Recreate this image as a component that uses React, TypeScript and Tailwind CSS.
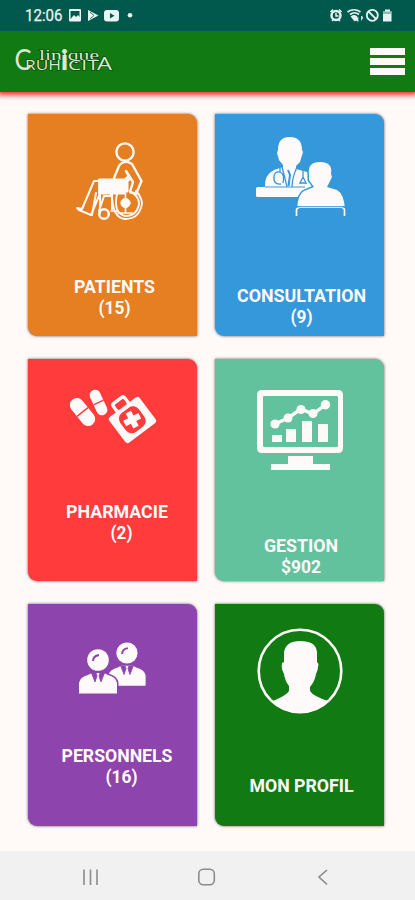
import type { ReactNode } from 'react';

function Line({ width, shift, children }: { width: number; shift?: number; children: string }) {
  return (
    <svg width="169" height="22" className="block overflow-visible" fill="#fffafa">
      <text x={84.5 + (shift ?? 0)} y="16.8" textAnchor="middle" textLength={width} lengthAdjust="spacingAndGlyphs" fontFamily="Roboto, sans-serif" fontWeight="700" fontSize="18">
        {children}
      </text>
    </svg>
  );
}

function Card({ color, box, gap, icon, children }: { color: string; box: string; gap: string; icon: ReactNode; children: ReactNode }) {
  return (
    <section className={`flex h-[222px] flex-col rounded-tr-[9px] rounded-bl-[9px] shadow-[0_0_3px_rgba(40,40,40,0.75)] ${color}`}>
      <svg viewBox={box} width="169" height="120" className="block shrink-0" fill="#fffafa">
        {icon}
      </svg>
      <div className={`flex flex-col -space-y-px ${gap}`}>{children}</div>
    </section>
  );
}

const wheelchair = (
  <g fill="none" stroke="#fffafa" strokeWidth="2.4" strokeLinejoin="round" strokeLinecap="round">
    <circle cx="125" cy="152" r="8.6" />
    <path d="M114 178L119 166Q122 161 128 162L132 164L141.500 181L136 194L130 192L133 182L126 171L130 179L127 181" />
    <path d="M99 181H94L82 209L77 208L79 210L91 215L101 191M96 193L92 215M111 193V196H104L99 211M112 193V209M100 195V213" strokeWidth="2" />
    <path d="M99 179H124L128 176V192H125V194H99Z" fill="#fffafa" strokeWidth="1" />
    <path d="M112 193Q112 218 125 219Q140 219 142 203Q141 196 136 191M117 194Q113 213 125 216Q137 216 139 204Q139 198 134 194" strokeWidth="1.9" />
    <circle cx="104" cy="214" r="4.800" />
    <circle cx="125.5" cy="203" r="4.6" fill="#fffafa" strokeWidth="1" />
    <path d="M125.5 193V212M118 213H132M111 211H117" strokeWidth="1.6" />
  </g>
);

const consultation = (
  <g>
    <path d="M278 150Q278 137 289.500 137Q302 137 302 150L303 152L300 162L296 166V169L307 172Q314 176 313 187H265Q264 175 274 170L283 167V165L279 160L277 153Z" />
    <path d="M257.500 187H313V197H257.500Q256 197 256 195.500V188.500Q256 187 257.500 187Z" />
    <g fill="none" stroke="#3498db" strokeWidth="1.3">
      <path d="M282 167Q285 178 287 187M297 167Q292 178 292 187M280 168V172M281 184Q273 185 274 176Q275 171 280 172Q285 174 283 183M303 169V178M303 177L299.500 184M303 177L306.500 184M300 183H306" />
      <path d="M288 170L290 175L288.500 186" strokeWidth="2" />
      <path d="M265 187H305" strokeWidth="1" />
    </g>
    <path d="M309 175Q307 162 320 162Q333 162 331 174L332 177L327 187L337 190Q344 194 345 209H297Q298 194 304 191L314 187L309 180Z" stroke="#3498db" strokeWidth="3" paintOrder="stroke" />
    <path d="M296.5 217V208H344V217" fill="none" stroke="#3498db" strokeWidth="4" />
    <path d="M296.500 216V210Q296.500 208 299 208M342 208Q344.500 208 344.500 210V216" fill="none" stroke="#fffafa" strokeWidth="1.7" />
    <path d="M299 207.300H342" stroke="#fffafa" strokeWidth="1" />
  </g>
);

function Pill({ place, w, h }: { place: string; w: number; h: number }) {
  return (
    <g transform={place}>
      <rect x={-w / 2} y={-h / 2} width={w} height={h} rx={w / 2} />
      <path d={`M${-w / 2} 0H${w / 2}`} stroke="#ff3b3b" strokeWidth="1.4" />
    </g>
  );
}

const pharmacy = (
  <g>
    <Pill place="translate(82.5 412) rotate(-39)" w={14} h={32} />
    <Pill place="translate(98.500 402.5) rotate(-25)" w={11} h={27} />
    <g transform="translate(131 418) rotate(-37)">
      <rect x="-19" y="-13.500" width="38" height="32" rx="3" />
      <path d="M-7 -13V-20Q-7 -22 -5 -22H5Q7 -22 7 -20V-13" fill="none" stroke="#fffafa" strokeWidth="3.5" />
      <path d="M-5.500 -16.800H5.500" stroke="#ff3b3b" strokeWidth="3" />
      <rect x="-11.500" y="-9.500" width="23" height="23.500" rx="7" fill="#ff3b3b" />
      <path d="M-3 -6.500H3V-1H8.500V5H3V10.500H-3V5H-8.500V-1H-3Z" transform="rotate(10 0 2)" />
    </g>
  </g>
);

const chart = (
  <g>
    <path fillRule="evenodd" d="M262 390H338Q343 390 343 395V448Q343 453 338 453H262Q257 453 257 448V395Q257 390 262 390ZM264 396Q263 396 263 397V446Q263 447 264 447H337Q338 447 338 446V397Q338 396 337 396Z" />
    <path d="M288 456H313V464H330V470H271V464H288ZM272 435H282V442H272ZM286 429H296V442H286ZM302 421H312V442H302ZM318 424H328V442H318Z" />
    <path d="M275 424L288 418L301 409L313 414L325 405" fill="none" stroke="#fffafa" strokeWidth="3.4" />
    <circle cx="275" cy="424" r="4.6" />
    <circle cx="288" cy="418" r="4.5" />
    <circle cx="301" cy="409.5" r="4.5" />
    <circle cx="313" cy="413.500" r="4.5" />
    <circle cx="325.5" cy="404.7" r="4.7" />
  </g>
);

function Person() {
  return (
    <g>
      <path d="M-19 33.500V23Q-18 17 -10 15L-6 13H6L10 15Q18 17 19 23V33.500Z" stroke="#8e44ad" strokeWidth="3" paintOrder="stroke" />
      <circle r="10.8" stroke="#8e44ad" strokeWidth="2.5" paintOrder="stroke" />
      <path d="M-5 1Q-5 -4 1 -5" fill="none" stroke="#8e44ad" strokeWidth="2" />
      <path d="M-6.500 13L-3 22L-1 16L-2 13M6.500 13L3 22L1 16L2 13" fill="#8e44ad" stroke="#8e44ad" strokeWidth=".8" />
    </g>
  );
}

const staff = (
  <g>
    <g transform="translate(127 653) scale(.98)"><Person /></g>
    <g transform="translate(98 660)"><Person /></g>
  </g>
);

const profile = (
  <g>
    <circle cx="300" cy="671" r="41.3" fill="none" stroke="#fffafa" strokeWidth="2.6" />
    <path d="M273 701Q287 695 289 691V686Q285 681 284 674Q281 669 282 663L284 662V652Q286 641 300 641Q316 641 317 652V662L318.500 664Q318 670 316 674Q315 681 310 687V691Q313 696 328 701Q317 713 300 713Q283 713 273 701Z" />
  </g>
);

function StatusBar() {
  return (
    <div className="relative z-20 flex h-[31px] shrink-0 items-center bg-[#00594c]">
      <svg width="415" height="31" viewBox="0 0 415 31" className="block" fill="#e9f5f2">
        <text x="25" y="21" fontFamily="Roboto, sans-serif" fontSize="16" textLength="37.5" lengthAdjust="spacingAndGlyphs" stroke="#e9f5f2" strokeWidth=".25">12:06</text>
        <path fillRule="evenodd" d="M70 9H80Q81 9 81 10V20Q81 21.500 80 21.500H70Q69 21.500 69 20V10Q69 9 70 9ZM70.500 11V19L74 15L76 17L78 15L79.500 17V11Z" />
        <path d="M88 10L98.500 15.500L88 21Z" />
        <path d="M90 12L94 15.500L90 19" fill="none" stroke="#00594c" strokeWidth=".8" />
        <rect x="104" y="10" width="15" height="11.5" rx="3" />
        <path d="M110 13L114.500 15.700L110 18.500Z" fill="#00594c" />
        <circle cx="130" cy="15.300" r="2.300" />
        <circle cx="336" cy="15.500" r="4.500" fill="none" stroke="#e9f5f2" strokeWidth="2.400" />
        <path d="M330.500 12L333 9.500M341.500 12L339 9.500M332 21L334 19M340 21L338 19M336 13V16H338.500" stroke="#e9f5f2" strokeWidth="1.500" fill="none" />
        <path d="M347.500 12Q354 7.500 360.500 12M350 14.500Q354.500 11 359 14.500" stroke="#e9f5f2" strokeWidth="1.700" fill="none" />
        <path d="M354.500 21L351 16.500Q354 14 357 16.500V20ZM358 17V21.500L356.500 20M361.500 20.500V16L363 18" stroke="#e9f5f2" strokeWidth=".7" />
        <circle cx="372.300" cy="15.300" r="5.500" fill="none" stroke="#e9f5f2" strokeWidth="1.800" />
        <path d="M368.500 11.500L376.200 19.200" stroke="#e9f5f2" strokeWidth="1.800" />
        <path d="M385 9.500H390V11.500H391.500V21.500H383V11.500H385Z" />
        <path d="M383 11.500H391.500V14H383Z" fill="#93bbb4" />
      </svg>
    </div>
  );
}

function Logo() {
  return (
    <svg width="105" height="34" viewBox="12 45 105 34" className="block overflow-visible" fill="#dce8d2" fontFamily="Liberation Serif, serif">
      <g stroke="#05400a" strokeWidth="1.2" paintOrder="stroke">
        <text x="39" y="60" fontSize="14" textLength="60" lengthAdjust="spacingAndGlyphs">linique</text>
        <g fontFamily="Open Sans, sans-serif">
          <text x="25" y="69.500" fontSize="14" textLength="36" lengthAdjust="spacingAndGlyphs">RUH</text>
          <text x="68" y="69.500" fontSize="15" textLength="31" lengthAdjust="spacingAndGlyphs">CIT</text>
          <text x="97" y="69.500" fontSize="19" textLength="15" lengthAdjust="spacingAndGlyphs">A</text>
        </g>
      </g>
      <text x="14.500" y="69.500" fontSize="29" textLength="17" lengthAdjust="spacingAndGlyphs" fontFamily="Lato, sans-serif">C</text>
      <text x="60.500" y="69.500" fontSize="29" fontWeight="700" textLength="8" lengthAdjust="spacingAndGlyphs" fontFamily="Lato, sans-serif">i</text>
    </svg>
  );
}

export default function App() {
  return (
    <div className="flex h-[900px] w-[415px] flex-col overflow-hidden bg-[#fff9f8]">
      <StatusBar />
      <header className="z-10 flex h-[61px] shrink-0 items-center justify-between bg-[#117a12] pr-[10px] pl-3 shadow-[0_1px_5px_2px_#ff2b22]">
        <Logo />
        <button aria-label="Menu" className="-mt-px flex w-[35px] flex-col gap-[3px]">
          <span className="h-[7px] bg-[#fffafa]" />
          <span className="h-[7px] bg-[#fffafa]" />
          <span className="h-[7px] bg-[#fffafa]" />
        </button>
      </header>
      <main className="grid grow grid-cols-[169px_169px] content-start gap-x-[18px] gap-y-[23px] pt-[22px] pl-7">
        <Card color="bg-[#e67e22]" box="28 114 169 120" gap="mt-[42px]" icon={wheelchair}>
          <Line width={81} shift={2}>PATIENTS</Line>
          <Line width={32} shift={2}>(15)</Line>
        </Card>
        <Card color="bg-[#3498db]" box="215 114 169 120" gap="mt-[51px]" icon={consultation}>
          <Line width={129} shift={2}>CONSULTATION</Line>
          <Line width={22} shift={2}>(9)</Line>
        </Card>
        <Card color="bg-[#ff3b3b]" box="28 359 169 120" gap="mt-[22px]" icon={pharmacy}>
          <Line width={102} shift={4.5}>PHARMACIE</Line>
          <Line width={22} shift={9}>(2)</Line>
        </Card>
        <Card color="bg-[#62c29d]" box="215 359 169 120" gap="mt-[56px]" icon={chart}>
          <Line width={74} shift={1.5}>GESTION</Line>
          <Line width={40} shift={1.5}>$902</Line>
        </Card>
        <Card color="bg-[#8e44ad]" box="28 604 169 120" gap="mt-[21px]" icon={staff}>
          <Line width={111} shift={4.5}>PERSONNELS</Line>
          <Line width={32} shift={9}>(16)</Line>
        </Card>
        <Card color="bg-[#117a12]" box="215 604 169 120" gap="mt-[51px]" icon={profile}>
          <Line width={104} shift={2}>MON PROFIL</Line>
        </Card>
      </main>
      <nav className="h-[49px] shrink-0 bg-[#f1f1f1]">
        <svg width="415" height="49" viewBox="0 851 415 49" fill="none" stroke="#8b8b8b" strokeWidth="1.600" className="block">
          <path d="M84 869.500V885M90.500 869.500V885M97 869.500V885" />
          <rect x="198.800" y="869.300" width="15.500" height="15.500" rx="4.500" />
          <path d="M327 870L319 877L327 884.500" />
        </svg>
      </nav>
    </div>
  );
}
